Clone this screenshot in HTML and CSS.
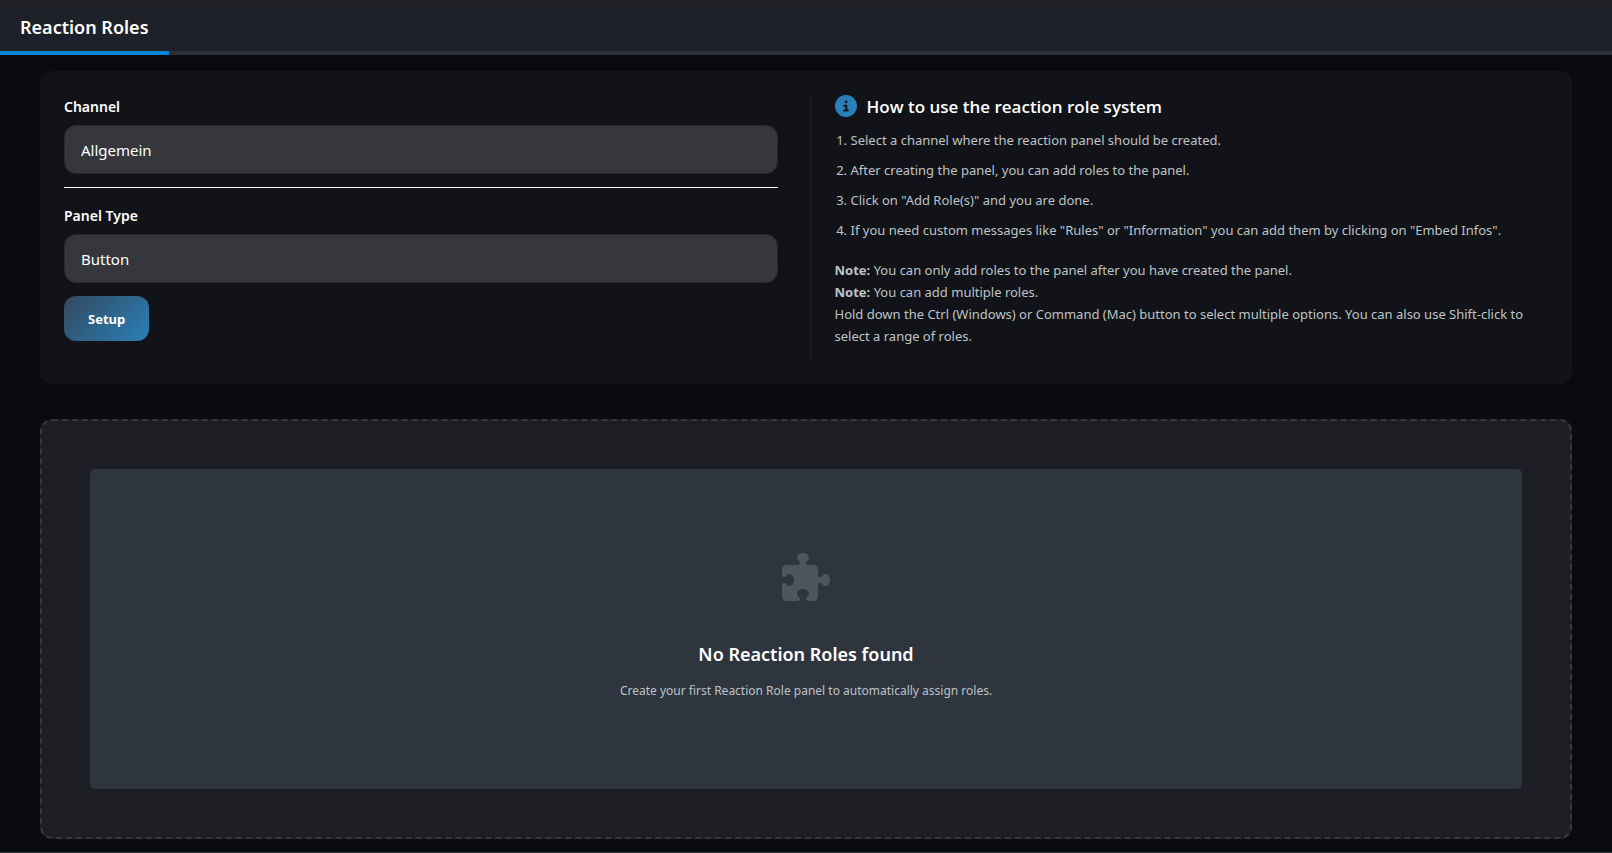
FILE: index.html
```html
<!DOCTYPE html>
<html lang="en">
<head>
<meta charset="utf-8">
<title>Reaction Roles</title>
<link rel="stylesheet" href="styles.css">
</head>
<body>
<header class="tabs">
  <h1 class="tab">Reaction Roles</h1>
</header>
<main class="content">
  <section class="card">
    <form class="setup">
      <label class="label" for="channel">Channel</label>
      <select class="field" id="channel"><option>Allgemein</option></select>
      <hr class="rule">
      <label class="label" for="type">Panel Type</label>
      <select class="field" id="type"><option>Button</option></select>
      <button class="button" type="button">Setup</button>
    </form>
    <div class="guide">
      <h2 class="guide-title">
        <svg class="info-icon" viewBox="0 0 512 512" aria-hidden="true"><path d="M256 512A256 256 0 1 0 256 0a256 256 0 1 0 0 512zM216 336h24V272H216c-13.300 0-24-10.700-24-24s10.700-24 24-24h48c13.300 0 24 10.700 24 24v88h8c13.300 0 24 10.700 24 24s-10.700 24-24 24H216c-13.300 0-24-10.700-24-24s10.700-24 24-24zm40-208a32 32 0 1 1 0 64 32 32 0 1 1 0-64z"/></svg>
        How to use the reaction role system
      </h2>
      <ol class="steps">
        <li>Select a channel where the reaction panel should be created.</li>
        <li>After creating the panel, you can add roles to the panel.</li>
        <li>Click on "Add Role(s)" and you are done.</li>
        <li>If you need custom messages like "Rules" or "Information" you can add them by clicking on "Embed Infos".</li>
      </ol>
      <p class="notes"><strong>Note:</strong> You can only add roles to the panel after you have created the panel.<br>
        <strong>Note:</strong> You can add multiple roles.<br>
        Hold down the Ctrl (Windows) or Command (Mac) button to select multiple options. You can also use Shift-click to select a range of roles.</p>
    </div>
  </section>
  <section class="dropzone">
    <div class="empty">
      <svg class="puzzle" viewBox="0 0 512 512" aria-hidden="true"><path d="M192 104.800c0-9.200-5.800-17.300-13.200-22.800C167.200 73.300 160 61.300 160 48c0-26.500 28.700-48 64-48s64 21.500 64 48c0 13.300-7.200 25.300-18.800 34c-7.400 5.500-13.200 13.600-13.200 22.800c0 12.800 10.400 23.200 23.200 23.200H336c26.500 0 48 21.500 48 48v56.800c0 12.800 10.400 23.200 23.200 23.200c9.200 0 17.300-5.800 22.800-13.200c8.700-11.600 20.700-18.800 34-18.800c26.500 0 48 28.700 48 64s-21.500 64-48 64c-13.300 0-25.300-7.200-34-18.800c-5.500-7.400-13.600-13.200-22.800-13.200c-12.800 0-23.200 10.400-23.200 23.200V464c0 26.500-21.500 48-48 48H279.200c-12.800 0-23.200-10.400-23.200-23.200c0-9.200 5.800-17.300 13.200-22.800c11.600-8.700 18.800-20.700 18.800-34c0-26.500-28.700-48-64-48s-64 21.500-64 48c0 13.300 7.200 25.300 18.800 34c7.400 5.500 13.200 13.600 13.200 22.800c0 12.800-10.400 23.200-23.200 23.200H48c-26.500 0-48-21.500-48-48V343.200C0 330.400 10.400 320 23.200 320c9.200 0 17.300 5.800 22.800 13.200C54.700 344.800 66.700 352 80 352c26.500 0 48-28.700 48-64s-21.500-64-48-64c-13.300 0-25.300 7.200-34 18.800C40.500 250.200 32.400 256 23.200 256C10.400 256 0 245.600 0 232.800V176c0-26.500 21.500-48 48-48H168.800c12.800 0 23.200-10.400 23.200-23.200z"/></svg>
      <h2 class="empty-title">No Reaction Roles found</h2>
      <p class="empty-text">Create your first Reaction Role panel to automatically assign roles.</p>
    </div>
  </section>
</main>
</body>
</html>
```
FILE: styles.css
```css
* { box-sizing: border-box; }

body {
  margin: 0;
  min-height: 100vh;
  background: #090b0f;
  color: #fff;
  border-bottom: 1px solid #3a3a3e;
  font: 14px/22px "Noto Sans", "Open Sans", sans-serif;
}

h1, h2, p, ol { margin: 0; }

.tabs {
  display: flex;
  background: linear-gradient(#1e2024, #1e2129 50%);
  box-shadow: inset 0 -4px #2e3038;
}

.tab {
  padding: 17px 20px 14px;
  border-bottom: 4px solid #0086d1;
  font-size: 18px;
  line-height: 20px;
  font-weight: 600;
}

.content { padding: 16px 40px 12px; }

.card {
  display: flex;
  gap: 32px;
  padding: 24px;
  border-radius: 12px;
  background: #121318;
}

.setup {
  flex: 1;
  display: flex;
  flex-direction: column;
  align-items: flex-start;
}

.label {
  font-size: 14px;
  line-height: 24px;
  font-weight: 600;
  margin-bottom: 6px;
}

.field {
  appearance: none;
  width: 100%;
  height: 49px;
  padding: 0 16px;
  border: 1px solid #27282d;
  border-radius: 12px;
  background: #36373c;
  color: #fff;
  font: 15px/22px "Noto Sans", "Open Sans", sans-serif;
}

.rule {
  width: 100%;
  margin: 13px 0 16px;
  border: 0;
  border-top: 1px solid #fff;
}

.button {
  height: 45px;
  margin-top: 13px;
  padding: 0 24px;
  border: 0;
  border-radius: 12px;
  background: linear-gradient(135deg, #34495e, #2980b9);
  color: #fff;
  font: 700 13px/22px "Noto Sans", "Open Sans", sans-serif;
}

.guide {
  flex: 1;
  padding: 0 0 13px 24px;
  border-left: 1px solid #1e1f24;
  color: #bdc3c7;
  font-size: 13px;
}

.guide-title {
  display: flex;
  align-items: flex-start;
  gap: 10px;
  color: #fff;
  font-family: "Open Sans", "Noto Sans", sans-serif;
  font-size: 17px;
  line-height: 24px;
  font-weight: 600;
}

.info-icon { width: 22px; height: 22px; fill: #2980b9; }

.steps {
  display: grid;
  gap: 8px;
  margin: 10px 0 18px;
  padding-left: 16px;
}

.dropzone {
  margin-top: 35px;
  padding: 48px;
  border: 2px dashed #37383d;
  border-radius: 12px;
  background: #1e1f24;
}

.empty {
  display: flex;
  flex-direction: column;
  align-items: center;
  padding: 84px 24px 87px;
  border-radius: 5px;
  background: #2f353f;
}

.puzzle { width: 48px; height: 48px; fill: #4f555f; }

.empty-title {
  margin: 39px 0 12px;
  font-size: 18px;
  line-height: 28px;
  font-weight: 600;
}

.empty-text { color: #bdc3c7; font-size: 12px; }
```
